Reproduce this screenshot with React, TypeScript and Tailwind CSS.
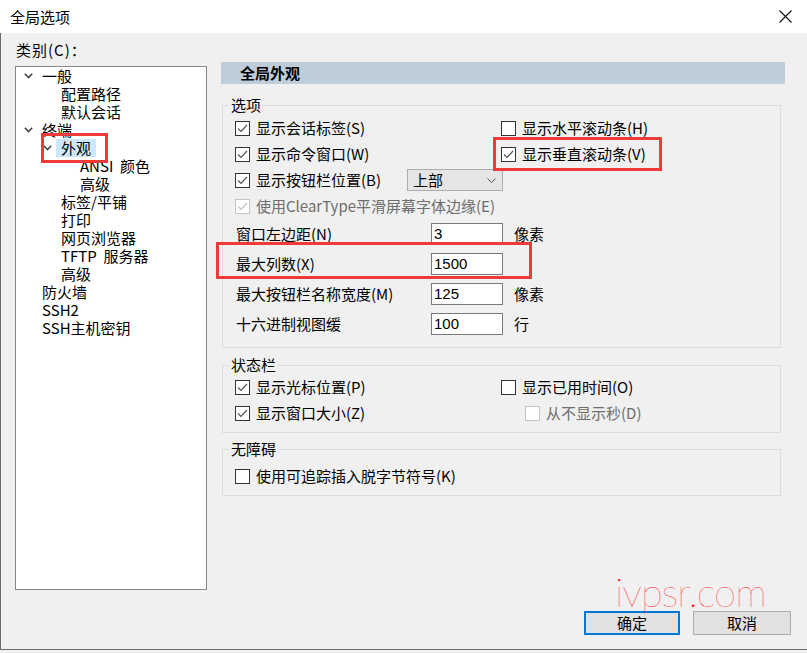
import React from 'react';

const CJK = "font-['SimSun','Noto_Sans_CJK_SC',sans-serif]";

function Check({ checked = false, disabled = false }: { checked?: boolean; disabled?: boolean }) {
  return (
    <span
      className={`inline-flex shrink-0 w-[15px] h-[15px] bg-white border ${
        disabled ? 'border-[#c4c4c4]' : 'border-[#333]'
      }`}
    >
      {checked && (
        <svg width="13" height="13" viewBox="0 0 13 13">
          <polyline
            points="2,6.5 5,9.5 11,3"
            fill="none"
            stroke={disabled ? '#c4c4c4' : '#555'}
            strokeWidth="1.2"
          />
        </svg>
      )}
    </span>
  );
}

function Chevron() {
  return (
    <svg width="9" height="6" viewBox="0 0 9 6">
      <polyline points="0.8,0.8 4.5,4.6 8.2,0.8" fill="none" stroke="#444" strokeWidth="1.6" />
    </svg>
  );
}

type Node = { label: string; pl: string; open?: boolean; selected?: boolean };

const tree: Node[] = [
  { label: '一般', pl: 'pl-[8px]', open: true },
  { label: '配置路径', pl: 'pl-[27px]' },
  { label: '默认会话', pl: 'pl-[27px]' },
  { label: '终端', pl: 'pl-[8px]', open: true },
  { label: '外观', pl: 'pl-[27px]', open: true, selected: true },
  { label: 'ANSI  颜色', pl: 'pl-[46px]' },
  { label: '高级', pl: 'pl-[46px]' },
  { label: '标签/平铺', pl: 'pl-[27px]' },
  { label: '打印', pl: 'pl-[27px]' },
  { label: '网页浏览器', pl: 'pl-[27px]' },
  { label: 'TFTP  服务器', pl: 'pl-[27px]' },
  { label: '高级', pl: 'pl-[27px]' },
  { label: '防火墙', pl: 'pl-[8px]' },
  { label: 'SSH2', pl: 'pl-[8px]' },
  { label: 'SSH主机密钥', pl: 'pl-[8px]' },
];

function CheckRow({ label, checked, disabled }: { label: string; checked?: boolean; disabled?: boolean }) {
  return (
    <div className="flex items-center gap-[6px]">
      <Check checked={checked} disabled={disabled} />
      <span className={disabled ? 'text-[#6d6d6d]' : ''}>{label}</span>
    </div>
  );
}

function InputRow({ label, value, unit }: { label: string; value: string; unit?: string }) {
  return (
    <div className="h-[30px] flex items-center">
      <span className="w-[196px] pl-px">{label}</span>
      <div className="w-[72px] h-[22px] bg-white border border-[#7a7a7a] flex items-center pl-[2px] font-['Liberation_Sans',sans-serif] text-[15px]">
        {value}
      </div>
      {unit && <span className="ml-[11px]">{unit}</span>}
    </div>
  );
}

function Group({ title, className, children }: { title: string; className: string; children: React.ReactNode }) {
  return (
    <div className={`relative ml-px w-[559px] border border-[#dcdcdc] pl-[12px] ${className}`}>
      <span className="absolute left-[6px] top-[-10px] px-[2px] bg-[#f0f0f0] leading-[18px]">{title}</span>
      {children}
    </div>
  );
}

export default function App() {
  return (
    <div className={`relative w-[807px] h-[653px] bg-[#f0f0f0] overflow-hidden text-[15px] leading-[18px] text-black ${CJK}`}>
      <div className="h-[33px] bg-white flex items-center justify-between pl-[10px] pr-[15px]">
        <span>全局选项</span>
        <svg width="13" height="13" viewBox="0 0 13 13">
          <path d="M0.5 0.5 L12.5 12.5 M12.5 0.5 L0.5 12.5" stroke="#111" strokeWidth="1.1" />
        </svg>
      </div>

      <div className="h-[617px] border-l border-b border-[#6b6b6b] flex flex-col">
        <div className="flex">
          <div className="pl-[14px]">
            <div className="mt-[8px] pl-px tracking-[1px]">类别(C)：</div>
            <div className="mt-[7px] w-[192px] h-[524px] border border-[#828790] bg-white">
              {tree.map((n, i) => (
                <div key={i} className={`h-[18px] flex items-center ${n.pl}`}>
                  <span className="w-[13px] flex items-center">{n.open && <Chevron />}</span>
                  <span className={`h-[18px] px-[5px] whitespace-pre ${n.selected ? 'bg-[#cce8ff]' : ''}`}>{n.label}</span>
                </div>
              ))}
            </div>
          </div>

          <div className="ml-[14px] w-[564px] mt-[29px]">
            <div className="h-[22px] bg-[#bfcddb] pl-[19px] font-bold leading-[22px]">全局外观</div>

            <Group title="选项" className="mt-[21px] pt-[9px] pb-[8px]">
              <div className="h-[26px] flex items-center">
                <div className="w-[266px]"><CheckRow label="显示会话标签(S)" checked /></div>
                <CheckRow label="显示水平滚动条(H)" />
              </div>
              <div className="h-[26px] flex items-center">
                <div className="w-[266px]"><CheckRow label="显示命令窗口(W)" checked /></div>
                <CheckRow label="显示垂直滚动条(V)" checked />
              </div>
              <div className="h-[26px] flex items-center">
                <div className="w-[172px]"><CheckRow label="显示按钮栏位置(B)" checked /></div>
                <div className="w-[96px] h-[22px] bg-[#e5e5e5] border border-[#adadad] flex items-center justify-between pl-[5px] pr-[6px]">
                  <span>上部</span>
                  <svg width="9" height="5" viewBox="0 0 9 5">
                    <polyline points="0.5,0.5 4.5,4.5 8.5,0.5" fill="none" stroke="#555" strokeWidth="1" />
                  </svg>
                </div>
              </div>
              <div className="h-[26px] flex items-center">
                <CheckRow label="使用ClearType平滑屏幕字体边缘(E)" checked disabled />
              </div>
              <InputRow label="窗口左边距(N)" value="3" unit="像素" />
              <InputRow label="最大列数(X)" value="1500" />
              <InputRow label="最大按钮栏名称宽度(M)" value="125" unit="像素" />
              <InputRow label="十六进制视图缓" value="100" unit="行" />
            </Group>

            <Group title="状态栏" className="mt-[17px] pt-[8px] pb-[6px]">
              <div className="h-[26px] flex items-center">
                <div className="w-[266px]"><CheckRow label="显示光标位置(P)" checked /></div>
                <CheckRow label="显示已用时间(O)" />
              </div>
              <div className="h-[26px] flex items-center">
                <div className="w-[290px]"><CheckRow label="显示窗口大小(Z)" checked /></div>
                <CheckRow label="从不显示秒(D)" disabled />
              </div>
            </Group>

            <Group title="无障碍" className="mt-[16px] pt-[13px] pb-[6px]">
              <div className="h-[26px] flex items-center">
                <CheckRow label="使用可追踪插入脱字节符号(K)" />
              </div>
            </Group>
          </div>
        </div>

        <div className="mt-[21px] flex justify-end pr-[16px]">
          <button className="w-[96px] h-[24px] border-2 border-[#0078d7] bg-[#e1e1e1] flex items-center justify-center">确定</button>
          <button className="ml-[13px] w-[98px] h-[24px] border border-[#adadad] bg-[#e1e1e1] flex items-center justify-center">取消</button>
        </div>
      </div>

      {/* watermark */}
      <div className="absolute left-[615px] top-[572px] text-[#ff1010] font-['Lato',sans-serif] font-thin text-[40px] leading-none tracking-[-1px] pointer-events-none">
        ivpsr.com
      </div>

      {/* red annotations */}
      <div className="absolute left-[41px] top-[133px] w-[67px] h-[30px] border-[3px] border-[#f03a3a]" />
      <div className="absolute left-[493px] top-[137px] w-[169px] h-[34px] border-[3px] border-[#f03a3a]" />
      <div className="absolute left-[216px] top-[242px] w-[316px] h-[37px] border-[3px] border-[#f03a3a]" />
    </div>
  );
}
